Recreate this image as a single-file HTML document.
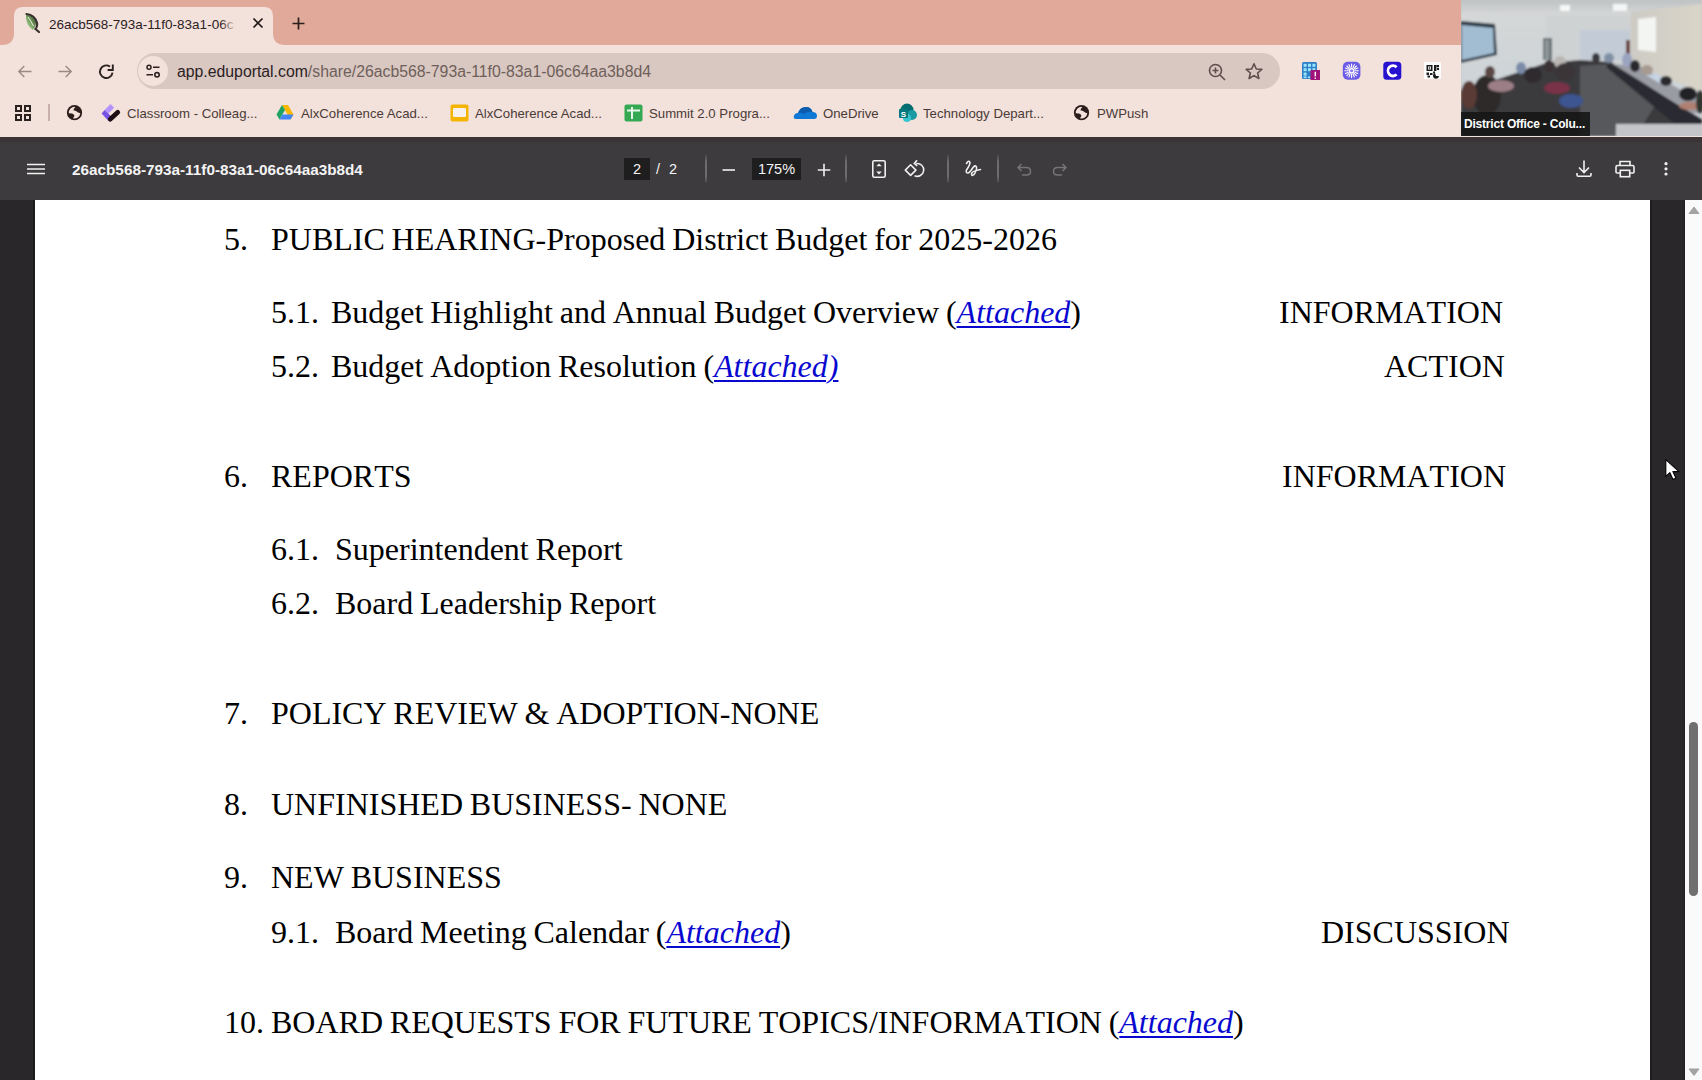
<!DOCTYPE html>
<html><head><meta charset="utf-8">
<style>
*{box-sizing:border-box;margin:0;padding:0}
html,body{width:1702px;height:1080px;overflow:hidden;background:#2a2a2a;font-family:"Liberation Sans",sans-serif}
.abs{position:absolute}
#tabstrip{left:0;top:0;width:1702px;height:45px;background:#e0a999}
#tab{left:14px;top:7px;width:265px;height:45px;background:#f3e1db;border-radius:9px 9px 0 0}
#toolbar{left:0;top:45px;width:1702px;height:92px;background:#f3e1db}
#omni{left:137px;top:53px;width:1143px;height:36px;background:#d9c7c1;border-radius:18px}
#pdfbar{left:0;top:137px;width:1702px;height:63px;background:#3d3b3d}
#pdfbar .topline{left:0;top:0;width:1702px;height:5px;background:#3a3437}
#viewer{left:0;top:200px;width:1702px;height:880px;background:#292729}
#page{left:35px;top:200px;width:1615px;height:880px;background:#fff}
#sbar{left:1685px;top:200px;width:17px;height:880px;background:#fafafa}
.doc{position:absolute;font-family:"Liberation Serif",serif;font-size:32px;line-height:32px;font-kerning:none;word-spacing:-1.2px;color:#000;white-space:pre}
.lnk{color:#0808d0;font-style:italic;text-decoration:underline;text-decoration-thickness:2px;text-underline-offset:3px}
.tabtitle{font-size:13.5px;line-height:16px;color:#2b211f;white-space:pre}
.url{font-size:15.8px;line-height:18px;color:#6e5f5a;white-space:pre}
.pdftitle{font-size:15.3px;font-weight:bold;line-height:18px;color:#f4f4f4;white-space:pre}
.pdfnum{font-size:14.5px;line-height:18px;color:#f4f4f4;white-space:pre}
.sep{position:absolute;top:155px;width:1.5px;height:28px;background:linear-gradient(#4a484a,#6e6c6e 25%,#6e6c6e 75%,#4a484a);border-radius:1px}
.camlbl{font-size:12px;font-weight:bold;line-height:14px;color:#fff;white-space:pre;letter-spacing:-0.2px}
.bm{position:absolute;top:105.5px;font-size:13.2px;line-height:16px;color:#4a3b37;white-space:pre}
</style></head><body>
<div id="tabstrip" class="abs"></div>
<div id="toolbar" class="abs"></div>
<!-- active tab -->
<svg class="abs" style="left:0;top:0" width="300" height="47">
<path d="M2 45 Q14 45 14 33 L14 16 Q14 7 23 7 L264 7 Q273 7 273 16 L273 33 Q273 45 285 45 Z" fill="#f3e1db"/>
</svg>
<svg class="abs" style="left:22px;top:12px" width="20" height="21" viewBox="0 0 20 21"><defs><linearGradient id="lf" x1="1" y1="0" x2="0" y2="1"><stop offset="0" stop-color="#2f3d2c"/><stop offset="0.5" stop-color="#6f9a5a"/><stop offset="1" stop-color="#d0eebb"/></linearGradient></defs><path d="M4 2 Q3 13 11 18 Q15 12 14 8 Q11 3 4 2Z" fill="url(#lf)"/><path d="M4.5 2 Q13 3 15 11 Q15.5 15 13.5 17 L17 20" stroke="#3a3230" stroke-width="2.2" fill="none" stroke-linecap="round"/><path d="M6 5 Q9 9 11.5 14" stroke="#e9f0e0" stroke-width="1" fill="none"/></svg>
<div class="abs tabtitle" style="left:49px;top:16.5px">26acb568-793a-11f0-83a1-06c</div>
<div class="abs" style="left:220px;top:10px;width:24px;height:26px;background:linear-gradient(90deg,rgba(243,225,219,0),#f3e1db 70%)"></div>
<svg class="abs" style="left:252px;top:17px" width="12" height="12" viewBox="0 0 12 12"><path d="M1.5 1.5 L10.5 10.5 M10.5 1.5 L1.5 10.5" stroke="#1f1816" stroke-width="1.7"/></svg>
<svg class="abs" style="left:292px;top:17px" width="13" height="13" viewBox="0 0 13 13"><path d="M6.5 0.5 V12.5 M0.5 6.5 H12.5" stroke="#2a1f1c" stroke-width="1.7"/></svg>

<!-- nav buttons -->
<svg class="abs" style="left:16px;top:63px" width="18" height="18" viewBox="0 0 18 18"><path d="M15.5 8.5 H3 M8.3 3 L2.8 8.5 L8.3 14" stroke="#9b8984" stroke-width="1.4" fill="none"/></svg>
<svg class="abs" style="left:56px;top:63px" width="18" height="18" viewBox="0 0 18 18"><path d="M2.5 8.5 H15 M9.7 3 L15.2 8.5 L9.7 14" stroke="#9b8984" stroke-width="1.4" fill="none"/></svg>
<svg class="abs" style="left:97px;top:62px" width="18" height="18" viewBox="0 0 18 18"><path d="M12.9 4.6 A6.3 6.3 0 1 0 15.5 10.6" stroke="#2b211f" stroke-width="1.9" fill="none"/><path d="M15.8 2.6 V8 H10.6" stroke="#2b211f" stroke-width="1.9" fill="none"/></svg>

<div id="omni" class="abs"></div>
<div class="abs" style="left:138px;top:56px;width:30px;height:30px;border-radius:15px;background:#f3e1db"></div>
<svg class="abs" style="left:145px;top:63px" width="16" height="16" viewBox="0 0 16 16"><circle cx="4" cy="4.2" r="2" stroke="#2b211f" stroke-width="1.5" fill="none"/><path d="M8 4.2 H14.5 M1.5 11.8 H8" stroke="#2b211f" stroke-width="1.6"/><circle cx="12" cy="11.8" r="2.2" stroke="#2b211f" stroke-width="1.6" fill="none"/></svg>
<div class="abs url" style="left:177px;top:63px"><span style="color:#2b211f">app.eduportal.com</span>/share/26acb568-793a-11f0-83a1-06c64aa3b8d4</div>
<svg class="abs" style="left:1207px;top:62px" width="20" height="20" viewBox="0 0 20 20"><circle cx="8.5" cy="8.5" r="6" stroke="#5d4f4b" stroke-width="1.6" fill="none"/><path d="M8.5 5.5 V11.5 M5.5 8.5 H11.5 M13 13 L18 18" stroke="#5d4f4b" stroke-width="1.6"/></svg>
<svg class="abs" style="left:1244px;top:62px" width="20" height="19" viewBox="0 0 20 19"><path d="M10 1.8 L12.3 7 L17.8 7.4 L13.6 11 L14.9 16.5 L10 13.6 L5.1 16.5 L6.4 11 L2.2 7.4 L7.7 7 Z" stroke="#5d4f4b" stroke-width="1.6" fill="none" stroke-linejoin="round"/></svg>

<!-- extensions -->
<svg class="abs" style="left:1301px;top:61px" width="20" height="20" viewBox="0 0 20 20">
<rect x="1" y="1" width="15" height="17" rx="1.5" fill="#2f7fc6"/>
<g fill="#9be6ff"><rect x="2.6" y="2.8" width="3" height="3"/><rect x="7" y="2.8" width="3" height="3"/><rect x="11.4" y="2.8" width="3" height="3"/><rect x="2.6" y="7.2" width="3" height="3"/><rect x="7" y="7.2" width="3" height="3"/><rect x="11.4" y="7.2" width="3" height="3"/><rect x="2.6" y="11.6" width="3" height="3"/><rect x="2.6" y="15.4" width="3" height="1.8"/><rect x="7" y="15.4" width="2" height="1.8"/></g>
<rect x="9.5" y="9" width="9.5" height="10" fill="#a0147a"/><rect x="13.6" y="10.8" width="1.4" height="4.6" fill="#fff"/><rect x="13.6" y="16.6" width="1.4" height="1.3" fill="#fff"/></svg>
<svg class="abs" style="left:1342px;top:61px" width="19" height="19" viewBox="0 0 19 19"><rect x="0.8" y="0.8" width="17.6" height="18" rx="5" fill="#6a5be6"/><circle cx="9.6" cy="9.8" r="2.2" fill="#8a7cf0" stroke="#fff" stroke-width="1.3"/><g stroke="#fff" stroke-width="1.1" stroke-linecap="round"><path d="M9.6 3 V6.3 M9.6 13.3 V16.6 M2.8 9.8 H6.1 M13.1 9.8 H16.4 M4.8 5 L7.1 7.3 M12.1 12.3 L14.4 14.6 M14.4 5 L12.1 7.3 M7.1 12.3 L4.8 14.6 M6.9 3.6 L8.1 6.5 M11.1 13.1 L12.3 16 M12.3 3.6 L11.1 6.5 M8.1 13.1 L6.9 16 M3.4 7.1 L6.3 8.3 M12.9 11.3 L15.8 12.5 M15.8 7.1 L12.9 8.3 M6.3 11.3 L3.4 12.5"/></g></svg>
<svg class="abs" style="left:1383px;top:61px" width="19" height="19" viewBox="0 0 19 19"><rect x="0.3" y="0.8" width="18" height="18" rx="3.5" fill="#2612cf"/><path d="M13.6 6.2 A5 5.2 0 1 0 13.6 13.4" stroke="#fff" stroke-width="2.8" fill="none"/></svg>
<svg class="abs" style="left:1424px;top:62px" width="17" height="17" viewBox="0 0 17 17"><rect x="0" y="0" width="17" height="17" fill="#fbfbfb"/><g fill="#1c1c1c"><rect x="2.5" y="3" width="6" height="6"/><rect x="10" y="3" width="2.4" height="6"/><rect x="12.4" y="3" width="2.6" height="2.2"/><rect x="13" y="6" width="2" height="2"/><rect x="2.5" y="10.5" width="2.5" height="2.5"/><rect x="6" y="11" width="2.5" height="2"/><rect x="3.5" y="13.5" width="2.5" height="2"/><path d="M11 11 A3 3 0 1 0 15 14 L12 14 Z"/><rect x="9" y="9.5" width="2" height="2"/></g><rect x="4" y="4.5" width="3" height="3" fill="#fbfbfb"/><rect x="4.8" y="5.3" width="1.4" height="1.4" fill="#1c1c1c"/></svg>

<!-- bookmarks -->
<svg class="abs" style="left:14px;top:104px" width="18" height="18" viewBox="0 0 18 18"><g stroke="#2b211f" stroke-width="2" fill="none"><rect x="2" y="2" width="5" height="5"/><rect x="11" y="2" width="5" height="5"/><rect x="2" y="11" width="5" height="5"/><rect x="11" y="11" width="5" height="5"/></g></svg>
<div class="abs" style="left:48px;top:104px;width:1.5px;height:17px;background:#c9b1ab"></div>
<svg class="abs" style="left:66px;top:104px" width="18" height="18" viewBox="0 0 18 18"><circle cx="8.5" cy="8.7" r="7.6" fill="#2b1d1b"/><path d="M2.8 9.2 A5.8 5.8 0 0 1 9.3 2.9 Q7.6 4.6 7.4 6.3 Q9.6 6.6 10.8 7.6 Q11.6 8.8 14.3 9.3 A5.8 5.8 0 0 1 6.9 14.3 Q8.6 12.6 8.3 11.2 Q7.4 9.6 5.8 9.4 Z" fill="#f3e1db"/></svg>
<svg class="abs" style="left:100px;top:102px" width="22" height="22" viewBox="0 0 22 22"><path d="M10.5 2 L14.2 5.7 L8.3 11.6 L4.6 7.9 Z" fill="#b393ff"/><path d="M4.6 7.9 L8.3 11.6 L12.2 15.5 L8.8 19.2 L1.6 11.5 Z" fill="#7553e4"/><path d="M10.2 17.3 L17.8 10.2" stroke="#1c0e12" stroke-width="4.6" stroke-linecap="round"/></svg>
<div class="bm" style="left:127px">Classroom - Colleag...</div>
<svg class="abs" style="left:276px;top:104px" width="18" height="17" viewBox="0 0 18 17"><path d="M6 1 L12 1 L17.5 10.5 L14.5 15.5 Z" fill="#f9b800"/><path d="M6 1 L0.5 10.5 L3.5 15.5 L9 6 Z" fill="#1fa463"/><path d="M3.5 15.5 L14.5 15.5 L17.5 10.5 L6.5 10.5 Z" fill="#4285f4"/></svg>
<div class="bm" style="left:301px">AlxCoherence Acad...</div>
<svg class="abs" style="left:450px;top:104px" width="19" height="18" viewBox="0 0 19 18"><rect x="0.5" y="0.5" width="18" height="17" rx="2" fill="#f4b400"/><rect x="3" y="4" width="13" height="9" rx="1" fill="#f8f0ea"/></svg>
<div class="bm" style="left:475px">AlxCoherence Acad...</div>
<svg class="abs" style="left:624px;top:104px" width="19" height="18" viewBox="0 0 19 18"><rect x="0.5" y="0.5" width="18" height="17" rx="2" fill="#34a853"/><path d="M3 6.5 H16 M8 3 V15" stroke="#e8f5ea" stroke-width="2"/></svg>
<div class="bm" style="left:649px">Summit 2.0 Progra...</div>
<svg class="abs" style="left:793px;top:105px" width="25" height="16" viewBox="0 0 25 16"><path d="M3 14 Q0 14 1 10.5 Q2 7.5 5 8 Q7 2 13 2 Q18 2 19.5 7 Q24 7 24 11 Q24 14 21 14 Z" fill="#0f78d4"/><path d="M5 8 Q7 2 13 2 Q18 2 19.5 7 Q14 6 11 9 Q8 7 5 8Z" fill="#0b5cad"/></svg>
<div class="bm" style="left:823px">OneDrive</div>
<svg class="abs" style="left:898px;top:103px" width="20" height="20" viewBox="0 0 20 20"><circle cx="9" cy="7" r="6.5" fill="#036c70"/><circle cx="14" cy="12" r="5" fill="#1a9ba1"/><circle cx="9" cy="15" r="4" fill="#37c6d0"/><rect x="1" y="6" width="9" height="9" rx="1" fill="#03787c"/><text x="5.5" y="13.5" font-size="8" font-weight="bold" fill="#fff" text-anchor="middle" font-family="Liberation Sans">S</text></svg>
<div class="bm" style="left:923px">Technology Depart...</div>
<svg class="abs" style="left:1073px;top:104px" width="18" height="18" viewBox="0 0 18 18"><circle cx="8.5" cy="8.7" r="7.6" fill="#2b1d1b"/><path d="M2.8 9.2 A5.8 5.8 0 0 1 9.3 2.9 Q7.6 4.6 7.4 6.3 Q9.6 6.6 10.8 7.6 Q11.6 8.8 14.3 9.3 A5.8 5.8 0 0 1 6.9 14.3 Q8.6 12.6 8.3 11.2 Q7.4 9.6 5.8 9.4 Z" fill="#f3e1db"/></svg>
<div class="bm" style="left:1097px">PWPush</div>

<!-- webcam -->
<div class="abs" id="cam" style="left:1461px;top:0;width:241px;height:136px;overflow:hidden;background:#c4c7c8">
<svg width="241" height="136" viewBox="0 0 241 136">
<defs><filter id="bl" x="-10%" y="-10%" width="120%" height="120%"><feGaussianBlur stdDeviation="1.2"/></filter>
<linearGradient id="ceil" x1="0" y1="0" x2="0" y2="1"><stop offset="0" stop-color="#bfc2c3"/><stop offset="1" stop-color="#d6d8d8"/></linearGradient>
<linearGradient id="lw" x1="0" y1="0" x2="0" y2="1"><stop offset="0" stop-color="#d6d8d7"/><stop offset="1" stop-color="#c8d0d8"/></linearGradient>
<linearGradient id="rw" x1="0" y1="0" x2="1" y2="0"><stop offset="0" stop-color="#cdcbc4"/><stop offset="1" stop-color="#d9d5c9"/></linearGradient>
</defs>
<g filter="url(#bl)">
<rect x="0" y="0" width="241" height="136" fill="url(#lw)"/>
<path d="M0 0 H241 V8 L200 12 L170 15 L90 15 L0 12 Z" fill="url(#ceil)"/>
<path d="M170 12 L241 4 L241 92 L205 78 L170 62 Z" fill="url(#rw)"/>
<rect x="85" y="15" width="85" height="48" fill="#cfd2d3"/>
<rect x="119" y="30" width="50" height="30" fill="#c3ccd6"/>
<rect x="99" y="5" width="10" height="6" fill="#f6f8f8"/>
<rect x="152" y="4" width="14" height="7" fill="#f4f6f6"/>
<path d="M0 21 L34 24 L36 55 L0 63 Z" fill="#2a3844"/>
<path d="M1 25 L32 28 L33 53 L1 60 Z" fill="#a2bdd2"/>
<rect x="82" y="38" width="9" height="22" fill="#6a7275"/><rect x="84" y="40" width="4" height="20" fill="#8e979a"/>
<path d="M177 19 L195 17 L195 52 L177 50 Z" fill="#f3f5f3"/>
<rect x="165" y="40" width="4" height="19" fill="#6a3a3a"/>
<path d="M0 92 L40 78 L85 63 L119 60 L150 62 L241 120 L241 136 L0 136 Z" fill="#3a3a3e"/>
<path d="M119 66 L150 64 L200 96 L175 136 L119 136 Z" fill="#57585c"/>
<path d="M148 63 L241 119 L241 127 L215 125 L145 67 Z" fill="#2c2c30"/>
<path d="M152 64 L232 113 L241 113 L241 102 L178 66 Z" fill="#9a9ca4"/><path d="M185 75 L200 84 L210 84 L196 74 Z" fill="#c8d4e4"/>
<rect x="155" y="124" width="86" height="12" fill="#c4c5c9"/>
<ellipse cx="26" cy="95" rx="14" ry="20" fill="#2d2a2c"/>
<ellipse cx="40" cy="86" rx="13" ry="6" fill="#9c7e86"/>
<ellipse cx="29" cy="72" rx="5" ry="6" fill="#5a4644"/>
<ellipse cx="60" cy="68" rx="5" ry="6" fill="#7b8ca8"/>
<ellipse cx="72" cy="75" rx="9" ry="8" fill="#2e2b2e"/>
<ellipse cx="88" cy="66" rx="5" ry="6" fill="#3a3234"/>
<ellipse cx="99" cy="62" rx="6" ry="6" fill="#b9b6b4"/>
<ellipse cx="104" cy="72" rx="10" ry="9" fill="#3a3638"/>
<ellipse cx="96" cy="88" rx="13" ry="6" fill="#7a3049"/>
<ellipse cx="110" cy="101" rx="12" ry="7" fill="#3d5590"/>
<ellipse cx="8" cy="95" rx="8" ry="14" fill="#5a3a34"/>
<ellipse cx="135" cy="58" rx="4" ry="5" fill="#38383e"/>
<ellipse cx="148" cy="58" rx="5" ry="5" fill="#8090a4"/>
<ellipse cx="166" cy="60" rx="5" ry="7" fill="#9aa4c0"/>
<ellipse cx="174" cy="66" rx="5" ry="6" fill="#2a2a2e"/>
<ellipse cx="186" cy="70" rx="6" ry="5" fill="#a79a90"/>
<ellipse cx="205" cy="81" rx="6" ry="5" fill="#2a2a2e"/><ellipse cx="227" cy="94" rx="9" ry="7" fill="#232327"/>
<ellipse cx="229" cy="106" rx="11" ry="4" fill="#b08072"/>
<ellipse cx="239" cy="102" rx="4" ry="12" fill="#33362f"/>
</g>
<rect x="0" y="112" width="129" height="24" fill="#141414" opacity="0.88"/>
</svg>
<div class="abs camlbl" style="left:3px;top:117px">District Office - Colu...</div>
</div>

<!-- pdf toolbar -->
<div id="pdfbar" class="abs"><div class="abs topline"></div></div>
<svg class="abs" style="left:26px;top:162px" width="20" height="14" viewBox="0 0 20 14"><path d="M1 2.5 H19 M1 7 H19 M1 11.5 H19" stroke="#f2f2f2" stroke-width="1.5"/></svg>
<div class="abs pdftitle" style="left:72px;top:161px">26acb568-793a-11f0-83a1-06c64aa3b8d4</div>
<div class="abs" style="left:624px;top:158px;width:26px;height:22px;background:#1f1e1f"></div>
<div class="abs pdfnum" style="left:624px;top:160px;width:26px;text-align:center">2</div>
<div class="abs pdfnum" style="left:656px;top:160px">/</div>
<div class="abs pdfnum" style="left:669px;top:160px">2</div>
<div class="abs sep" style="left:705px"></div>
<svg class="abs" style="left:721px;top:162px" width="16" height="16" viewBox="0 0 16 16"><path d="M1.5 8 H14" stroke="#f0f0f0" stroke-width="1.6"/></svg>
<div class="abs" style="left:752px;top:158px;width:49px;height:22px;background:#1f1e1f"></div>
<div class="abs pdfnum" style="left:752px;top:160px;width:49px;text-align:center">175%</div>
<svg class="abs" style="left:816px;top:162px" width="16" height="16" viewBox="0 0 16 16"><path d="M1.8 8 H14.3 M8 1.8 V14.3" stroke="#f0f0f0" stroke-width="1.6"/></svg>
<div class="abs sep" style="left:845px"></div>
<svg class="abs" style="left:871px;top:159px" width="16" height="20" viewBox="0 0 16 20"><rect x="1.8" y="1.8" width="12.4" height="16.4" rx="1.5" stroke="#f0f0f0" stroke-width="1.6" fill="none"/><path d="M5.2 7.2 L8 4.4 L10.8 7.2 Z M5.2 12.6 L8 15.4 L10.8 12.6 Z" fill="#f0f0f0"/></svg>
<svg class="abs" style="left:904px;top:159px" width="22" height="20" viewBox="0 0 22 20"><path d="M6.6 5.8 L11.9 11.1 L6.6 16.4 L1.3 11.1 Z" stroke="#f0f0f0" stroke-width="1.6" fill="none" stroke-linejoin="round"/><path d="M12.2 4.6 A6.4 6.4 0 1 1 10.6 16.7" stroke="#f0f0f0" stroke-width="1.6" fill="none"/><path d="M13 1.3 L10.3 4.4 L13.2 7" stroke="#f0f0f0" stroke-width="1.6" fill="none"/></svg>
<div class="abs sep" style="left:947px"></div>
<svg class="abs" style="left:964px;top:158px" width="19" height="20" viewBox="0 0 19 20"><path d="M2.5 5.5 Q5 1.5 6 4.5 Q6 7 2.5 12 Q1.5 15 4 15 Q6 14.5 9 9.5 Q11.5 6.5 12.5 9 Q13 12 10 16.5 Q8 18.5 7.5 16 Q7.5 13 16.5 11.5" stroke="#f0f0f0" stroke-width="1.6" fill="none" stroke-linecap="round" stroke-linejoin="round"/></svg>
<div class="abs sep" style="left:997px"></div>
<svg class="abs" style="left:1016px;top:162px" width="17" height="15" viewBox="0 0 17 15"><path d="M5.5 2 L2 5.5 L5.5 9 M2 5.5 H10.5 Q14.5 5.5 14.5 9.5 Q14.5 13 10.5 13 H6" stroke="#767476" stroke-width="1.5" fill="none"/></svg>
<svg class="abs" style="left:1051px;top:162px" width="17" height="15" viewBox="0 0 17 15"><path d="M11.5 2 L15 5.5 L11.5 9 M15 5.5 H6.5 Q2.5 5.5 2.5 9.5 Q2.5 13 6.5 13 H11" stroke="#767476" stroke-width="1.5" fill="none"/></svg>
<svg class="abs" style="left:1575px;top:159px" width="18" height="19" viewBox="0 0 18 19"><path d="M9 1.5 V13 M4 8.5 L9 13.5 L14 8.5 M2 14 V16 Q2 17.3 3.3 17.3 H14.7 Q16 17.3 16 16 V14" stroke="#f0f0f0" stroke-width="1.6" fill="none"/></svg>
<svg class="abs" style="left:1615px;top:160px" width="20" height="18" viewBox="0 0 20 18"><path d="M5 5.5 V1.5 H15 V5.5 M5 13 H2 Q1 13 1 12 V7 Q1 5.5 2.5 5.5 H17.5 Q19 5.5 19 7 V12 Q19 13 18 13 H15" stroke="#f0f0f0" stroke-width="1.6" fill="none"/><rect x="5.3" y="10.3" width="9.4" height="6.4" stroke="#f0f0f0" stroke-width="1.6" fill="none"/></svg>
<svg class="abs" style="left:1662px;top:161px" width="8" height="16" viewBox="0 0 8 16"><circle cx="4" cy="2.7" r="1.6" fill="#f0f0f0"/><circle cx="4" cy="7.8" r="1.6" fill="#f0f0f0"/><circle cx="4" cy="13" r="1.6" fill="#f0f0f0"/></svg>
<div id="viewer" class="abs"></div>
<div id="page" class="abs"></div>
<div class="abs" style="left:33px;top:200px;width:2px;height:880px;background:#1d1c1d"></div>
<div class="abs" style="left:1650px;top:200px;width:1.5px;height:880px;background:#1d1d1d"></div>
<div class="abs" style="left:1683.5px;top:200px;width:1.5px;height:880px;background:#1f1f1f"></div>
<div id="sbar" class="abs"></div>
<svg class="abs" style="left:1687px;top:204px" width="14" height="12" viewBox="0 0 14 12"><path d="M2 9.5 L7 3 L12 9.5 Z" fill="#a3a3a3" stroke="#a3a3a3" stroke-width="1" stroke-linejoin="round"/></svg>
<svg class="abs" style="left:1687px;top:1066px" width="14" height="12" viewBox="0 0 14 12"><path d="M2 3 L7 9.5 L12 3 Z" fill="#a3a3a3" stroke="#a3a3a3" stroke-width="1" stroke-linejoin="round"/></svg>
<div class="abs" style="left:1688.5px;top:722px;width:9.5px;height:174px;border-radius:5px;background:#6f6f6f"></div>
<svg class="abs" style="left:1664px;top:457px" width="18" height="25" viewBox="0 0 18 25"><path d="M1.8 2.6 L1.8 19.4 L5.9 15.7 L9 22.4 L11.9 21.1 L8.9 14.6 L15 14.6 Z" fill="#fff" stroke="#000" stroke-width="1.1" stroke-linejoin="round"/></svg>

<!-- document text -->
<div class="doc" style="left:224px;top:223px">5.</div>
<div class="doc" style="left:271px;top:223px">PUBLIC HEARING-Proposed District Budget for 2025-2026</div>
<div class="doc" style="left:271px;top:296px">5.1.</div>
<div class="doc" style="left:331px;top:296px">Budget Highlight and Annual Budget Overview (<span class="lnk">Attached</span>)</div>
<div class="doc" style="left:1279px;top:296px">INFORMATION</div>
<div class="doc" style="left:271px;top:350px">5.2.</div>
<div class="doc" style="left:331px;top:350px">Budget Adoption Resolution (<span class="lnk">Attached)</span></div>
<div class="doc" style="left:1384px;top:350px">ACTION</div>
<div class="doc" style="left:224px;top:460px">6.</div>
<div class="doc" style="left:271px;top:460px">REPORTS</div>
<div class="doc" style="left:1282px;top:460px">INFORMATION</div>
<div class="doc" style="left:271px;top:533px">6.1.</div>
<div class="doc" style="left:335px;top:533px">Superintendent Report</div>
<div class="doc" style="left:271px;top:587px">6.2.</div>
<div class="doc" style="left:335px;top:587px">Board Leadership Report</div>
<div class="doc" style="left:224px;top:697px">7.</div>
<div class="doc" style="left:271px;top:697px">POLICY REVIEW &amp; ADOPTION-NONE</div>
<div class="doc" style="left:224px;top:788px">8.</div>
<div class="doc" style="left:271px;top:788px">UNFINISHED BUSINESS- NONE</div>
<div class="doc" style="left:224px;top:861px">9.</div>
<div class="doc" style="left:271px;top:861px">NEW BUSINESS</div>
<div class="doc" style="left:271px;top:916px">9.1.</div>
<div class="doc" style="left:335px;top:916px">Board Meeting Calendar (<span class="lnk">Attached</span>)</div>
<div class="doc" style="left:1321px;top:916px">DISCUSSION</div>
<div class="doc" style="left:224px;top:1006px">10.</div>
<div class="doc" style="left:271px;top:1006px">BOARD REQUESTS FOR FUTURE TOPICS/INFORMATION (<span class="lnk">Attached</span>)</div>

</body></html>
